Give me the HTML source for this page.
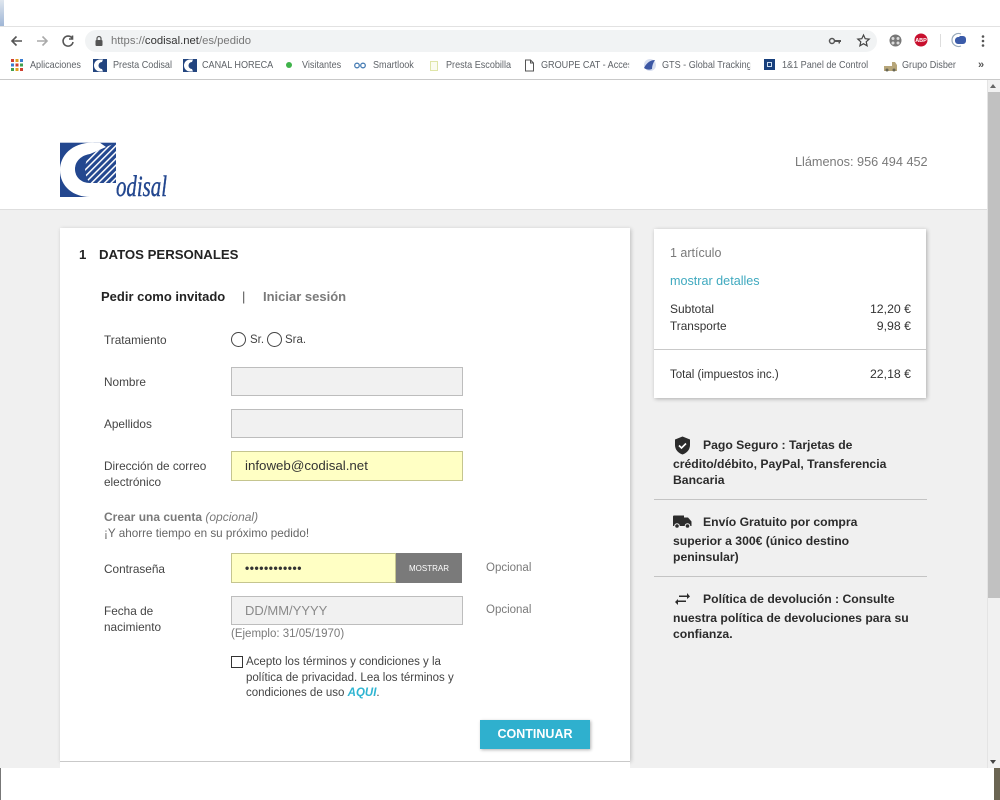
<!DOCTYPE html>
<html lang="es"><head><meta charset="utf-8"><title>Codisal pedido</title>
<style>
html,body{margin:0;padding:0;width:1000px;height:800px;overflow:hidden;background:#fff}
body{position:relative;font-family:"Liberation Sans",Arial,sans-serif;color:#3a3a3a}
.a{position:absolute;white-space:nowrap}
.bm{top:59px;font-size:10.2px;line-height:13px;color:#5f6368;transform:scaleX(.89);transform-origin:left center}
.lb{font-size:11.8px;line-height:16px;color:#444;left:104px}
.in{position:absolute;box-sizing:border-box;height:30px;left:231px;width:232px;background:#f1f1f1;border:1px solid #bdbdbd}
.y{background:#ffffc4;border-color:#c5c58f}
.h{font-size:12.2px;font-weight:bold;line-height:18px;color:#2b2b2b;left:673px}
.hr{position:absolute;left:654px;width:273px;height:1px;background:#c4c4c4}
.gr{color:#7a7a7a}
</style></head><body>
<div class="a" style="left:0;top:0;width:4px;height:26px;background:linear-gradient(#dfe6ee,#9fb6d6)"></div>
<div class="a" style="left:0;top:26px;width:1000px;height:54px;background:#fff"></div>
<div class="a" style="left:0;top:26px;width:1000px;height:1px;background:#e2e2e2"></div>
<div class="a" style="left:0;top:79px;width:1000px;height:1px;background:#c9c9c9"></div>
<svg class="a" style="left:8px;top:32px" width="70" height="18" viewBox="0 0 70 18" fill="none" stroke-width="1.6">
<path d="M14 9H4M8.500 4.500L4 9l4.500 4.500" stroke="#555"/>
<path d="M29 9H39M34.500 4.500L39 9l-4.500 4.500" stroke="#aaa"/>
<path d="M64 6a5 5 0 1 0 1 4M64.500 3.500V7H61" stroke="#555"/>
</svg>
<div class="a" style="left:85px;top:30px;width:792px;height:22px;border-radius:11px;background:#f1f3f4"></div>
<svg class="a" style="left:94px;top:35px" width="10" height="12" viewBox="0 0 10 12"><rect x="1.500" y="5" width="7" height="6" rx="1" fill="#555"/><path d="M3 5V3.500a2 2 0 0 1 4 0V5" fill="none" stroke="#555" stroke-width="1.200"/></svg>
<div class="a" style="left:111px;top:34px;font-size:11.3px;line-height:14px;color:#777">https://<span style="color:#333">codisal.net</span>/es/pedido</div>
<svg class="a" style="left:828px;top:34px" width="14" height="14" viewBox="0 0 14 14"><circle cx="4" cy="7" r="2.500" fill="none" stroke="#555" stroke-width="1.500"/><path d="M6.500 6h6.500v2h-1v1.500h-1.500V8H6.500z" fill="#555"/></svg>
<svg class="a" style="left:856px;top:33px" width="15" height="15" viewBox="0 0 15 15"><path d="M7.500 2l1.700 3.700 4 .4-3 2.700.9 4-3.600-2.100-3.600 2.100.9-4-3-2.700 4-.4z" fill="none" stroke="#444" stroke-width="1.200"/></svg>
<svg class="a" style="left:888px;top:33px" width="15" height="15" viewBox="0 0 15 15"><circle cx="7.500" cy="7.500" r="6" fill="#777"/><circle cx="5" cy="5.500" r="1.500" fill="#ddd"/><circle cx="10" cy="5.500" r="1.500" fill="#ddd"/><circle cx="5" cy="10" r="1.500" fill="#ddd"/><circle cx="10" cy="10" r="1.500" fill="#ddd"/></svg>
<svg class="a" style="left:914px;top:33px" width="14" height="14" viewBox="0 0 14 14"><circle cx="7" cy="7" r="6.500" fill="#c8102e"/><text x="7" y="9" font-size="5.500" font-weight="bold" text-anchor="middle" fill="#fff" font-family="Liberation Sans">ABP</text></svg>
<div class="a" style="left:940px;top:34px;width:1px;height:13px;background:#ddd"></div>
<svg class="a" style="left:950px;top:32px" width="17" height="16" viewBox="0 0 17 16"><path d="M11 2A6.500 6.500 0 1 0 11 14" fill="none" stroke="#9ab" stroke-width="1.200"/><path d="M5 9a3.500 3.500 0 0 1 4-4l1-1h3a3 3 0 0 1 3 3v2a3 3 0 0 1-3 3H8a3 3 0 0 1-3-3z" fill="#3b5ba9"/></svg>
<svg class="a" style="left:981px;top:34px" width="4" height="14" viewBox="0 0 4 14" fill="#555"><circle cx="2" cy="2.500" r="1.300"/><circle cx="2" cy="7" r="1.300"/><circle cx="2" cy="11.500" r="1.300"/></svg>

<svg class="a" style="left:11px;top:59px" width="12" height="12" viewBox="0 0 12 12"><g><rect width="3" height="3" fill="#d04030"/><rect x="4.500" width="3" height="3" fill="#e0a020"/><rect x="9" width="3" height="3" fill="#3a7cd0"/><rect y="4.500" width="3" height="3" fill="#3a7cd0"/><rect x="4.500" y="4.500" width="3" height="3" fill="#d04030"/><rect x="9" y="4.500" width="3" height="3" fill="#40a050"/><rect y="9" width="3" height="3" fill="#40a050"/><rect x="4.500" y="9" width="3" height="3" fill="#e0a020"/><rect x="9" y="9" width="3" height="3" fill="#d04030"/></g></svg>
<div class="a bm" style="left:30px">Aplicaciones</div>
<svg class="a" style="left:93px;top:59px" width="14" height="13" viewBox="0 0 14 13"><rect width="14" height="13" fill="#23457f"/><path d="M7 0.500a6 6 0 1 0 0 12h3l-1-2.500a3.500 3.500 0 1 1 0-7l1-2.500z" fill="#fff"/></svg>
<div class="a bm" style="left:113px">Presta Codisal</div>
<svg class="a" style="left:183px;top:59px" width="14" height="13" viewBox="0 0 14 13"><rect width="14" height="13" fill="#23457f"/><path d="M7 0.500a6 6 0 1 0 0 12h3l-1-2.500a3.500 3.500 0 1 1 0-7l1-2.500z" fill="#fff"/></svg>
<div class="a bm" style="left:202px">CANAL HORECA</div>
<div class="a" style="left:286px;top:62px;width:6px;height:6px;border-radius:50%;background:#3fb34a"></div>
<div class="a bm" style="left:302px">Visitantes</div>
<svg class="a" style="left:354px;top:62px" width="12" height="7" viewBox="0 0 12 7" fill="none" stroke="#4a7fb5" stroke-width="1.300"><circle cx="3" cy="3.500" r="2.300"/><circle cx="9" cy="3.500" r="2.300"/></svg>
<div class="a bm" style="left:373px">Smartlook</div>
<div class="a" style="left:430px;top:61px;width:6px;height:8px;border:1px solid #dfe5a8;background:#fbfcf0"></div>
<div class="a bm" style="left:446px">Presta Escobilla</div>
<svg class="a" style="left:524px;top:59px" width="11" height="13" viewBox="0 0 11 13"><path d="M1.500 1h5l3 3v8h-8zM6.500 1v3h3" fill="none" stroke="#555"/></svg>
<div class="a bm" style="left:541px;width:99px;overflow:hidden">GROUPE CAT - Acces</div>
<svg class="a" style="left:643px;top:58px" width="14" height="14" viewBox="0 0 14 14"><ellipse cx="7" cy="7" rx="6" ry="6" fill="#d8dff0"/><path d="M1 10c3-6 7-8 11-8-2 3-3 6-3 9-3 1-5 1-8-1z" fill="#3c57a3"/></svg>
<div class="a bm" style="left:662px;width:99px;overflow:hidden">GTS - Global Tracking</div>
<div class="a" style="left:764px;top:59px;width:11px;height:11px;background:#173f7c"><div style="position:absolute;left:3px;top:3px;width:5px;height:5px;border:1px solid #cde;box-sizing:border-box"></div></div>
<div class="a bm" style="left:782px">1&amp;1 Panel de Control</div>
<svg class="a" style="left:884px;top:59px" width="13" height="13" viewBox="0 0 13 13"><path d="M0 7h8V3h3l2 3v6H0z" fill="#b7a67a"/><circle cx="3" cy="11" r="1.500" fill="#665"/><circle cx="10" cy="11" r="1.500" fill="#665"/></svg>
<div class="a bm" style="left:902px">Grupo Disber</div>
<div class="a" style="left:978px;top:58px;font-size:11px;font-weight:bold;line-height:14px;color:#555">»</div>

<!-- page -->
<div class="a" style="left:0;top:80px;width:987px;height:129px;background:#fff"></div>
<div class="a" style="left:0;top:209px;width:987px;height:559px;background:#f0f0f0;border-top:1px solid #dedede;box-sizing:border-box"></div>
<svg class="a" style="left:60px;top:142px" width="110" height="58" viewBox="0 0 110 58">
<defs><pattern id="h" width="4.600" height="4.600" patternUnits="userSpaceOnUse" patternTransform="rotate(45)"><rect width="4.600" height="4.600" fill="#23478f"/><rect width="1.500" height="4.600" fill="#fff"/></pattern></defs>
<rect x="0" y="0.700" width="56" height="54.300" fill="#23478f"/>
<path d="M30 12L46 5 56 .7V41H30C21 41 15 35 15 27 15 19 22 13 30 12z" fill="url(#h)"/>
<path d="M30 12C22 13 15 19 15 27 15 35 21 41 30 41 24 34 23 22 30 12z" fill="#23478f"/>
<path d="M34 .7C12 0 0 14 0 28 0 45 14 55 30 55H56V41H30C21 41 15 35 15 27 15 19 22 13 30 12L46 5 40 .7z" fill="#fff"/>
<text x="56" y="54" font-family="Liberation Serif" font-style="italic" font-size="30" fill="#23478f" stroke="#23478f" stroke-width=".4" textLength="51" lengthAdjust="spacingAndGlyphs">odisal</text>
</svg>
<div class="a" style="left:795px;top:153px;font-size:12.700px;line-height:18px;color:#7a7a7a">Llámenos: 956 494 452</div>

<div class="a" style="left:60px;top:228px;width:570px;height:533px;background:#fff;box-shadow:1px 1px 4px rgba(0,0,0,.22)"></div>
<div class="a" style="left:60px;top:761px;width:570px;height:7px;background:#fff;border-top:1px solid #c9c9c9"></div>
<div class="a" style="left:79px;top:246px;font-size:13.200px;font-weight:bold;line-height:18px;color:#232323">1</div>
<div class="a" style="left:99px;top:246px;font-size:13.200px;font-weight:bold;line-height:18px;color:#232323">DATOS PERSONALES</div>
<div class="a" style="left:101px;top:288px;font-size:13px;font-weight:bold;line-height:18px;color:#232323">Pedir como invitado</div>
<div class="a" style="left:242px;top:288px;font-size:13px;line-height:18px;color:#555">|</div>
<div class="a" style="left:263px;top:288px;font-size:13px;font-weight:bold;line-height:18px;color:#7a7a7a">Iniciar sesión</div>

<div class="a lb" style="top:332px">Tratamiento</div>
<div class="a" style="left:231px;top:332px;width:13px;height:13px;border:1.500px solid #444;border-radius:50%;background:#fff"></div>
<div class="a" style="left:250px;top:332px;font-size:11.500px;line-height:16px;color:#444">Sr.</div>
<div class="a" style="left:267px;top:332px;width:13px;height:13px;border:1.500px solid #444;border-radius:50%;background:#fff"></div>
<div class="a" style="left:285px;top:332px;font-size:11.500px;line-height:16px;color:#444">Sra.</div>

<div class="a lb" style="top:374px">Nombre</div>
<div class="in" style="top:367px;height:29px"></div>
<div class="a lb" style="top:416px">Apellidos</div>
<div class="in" style="top:409px;height:29px"></div>
<div class="a lb" style="top:458px">Dirección de correo<br>electrónico</div>
<div class="in y" style="top:451px"></div>
<div class="a" style="left:245px;top:457px;font-size:13.300px;line-height:18px;color:#333">infoweb@codisal.net</div>

<div class="a" style="left:104px;top:509px;font-size:12px;line-height:16px;color:#7a7a7a"><b>Crear una cuenta</b> <i>(opcional)</i></div>
<div class="a" style="left:104px;top:526px;font-size:11.700px;line-height:16px;color:#666">¡Y ahorre tiempo en su próximo pedido!</div>

<div class="a lb" style="top:561px">Contraseña</div>
<div class="in y" style="top:553px;width:165px"></div>
<div class="a" style="left:396px;top:553px;width:66px;height:30px;background:#7a7a7a;color:#fff;font-size:8px;line-height:31px;text-align:center">MOSTRAR</div>
<div class="a" style="left:245px;top:559px;font-size:12px;line-height:18px;color:#333;letter-spacing:.55px;font-weight:bold">••••••••••••</div>
<div class="a gr" style="left:486px;top:560px;font-size:11.500px;line-height:16px">Opcional</div>

<div class="a lb" style="top:603px">Fecha de<br>nacimiento</div>
<div class="in" style="top:596px;height:29px"></div>
<div class="a" style="left:245px;top:602px;font-size:13px;line-height:18px;color:#8a8a8a">DD/MM/YYYY</div>
<div class="a gr" style="left:486px;top:602px;font-size:11.500px;line-height:16px">Opcional</div>
<div class="a gr" style="left:231px;top:626px;font-size:11.500px;line-height:16px">(Ejemplo: 31/05/1970)</div>

<div class="a" style="left:231px;top:656px;width:12px;height:12px;border:1.500px solid #333;background:#fff;box-sizing:border-box"></div>
<div class="a" style="left:246px;top:655px;font-size:11.500px;line-height:15.500px;color:#444">Acepto los términos y condiciones y la<br>política de privacidad. Lea los términos y<br>condiciones de uso <b style="color:#2fb5d2"><i>AQUI</i></b>.</div>

<div class="a" style="left:480px;top:720px;width:110px;height:29px;background:#2fb0ce;box-shadow:1px 1px 3px rgba(0,0,0,.3);color:#fff;font-size:12.500px;font-weight:bold;line-height:29px;text-align:center">CONTINUAR</div>

<!-- summary -->
<div class="a" style="left:654px;top:229px;width:272px;height:169px;background:#fff;box-shadow:1px 1px 4px rgba(0,0,0,.28)"></div>
<div class="a gr" style="left:670px;top:245px;font-size:12.500px;line-height:16px">1 artículo</div>
<div class="a" style="left:670px;top:273px;font-size:12.600px;line-height:16px;color:#3fa9bf">mostrar detalles</div>
<div class="a" style="left:670px;top:301px;font-size:12px;line-height:16px;color:#333">Subtotal</div>
<div class="a" style="left:810px;width:101px;text-align:right;top:301px;font-size:12.300px;line-height:16px;color:#333">12,20 €</div>
<div class="a" style="left:670px;top:318px;font-size:11.800px;line-height:16px;color:#333">Transporte</div>
<div class="a" style="left:810px;width:101px;text-align:right;top:318px;font-size:12.300px;line-height:16px;color:#333">9,98 €</div>
<div class="a" style="left:654px;top:349px;width:272px;height:1px;background:#c9c9c9"></div>
<div class="a" style="left:670px;top:367px;font-size:11.500px;line-height:16px;color:#333">Total (impuestos inc.)</div>
<div class="a" style="left:810px;width:101px;text-align:right;top:366px;font-size:12.300px;line-height:16px;color:#333">22,18 €</div>

<svg class="a" style="left:674px;top:436px" width="17" height="19" viewBox="0 0 17 19"><path d="M8.500 0.500L16 3.500V9c0 4.500-3 8-7.500 9.500C4 17 1 13.500 1 9V3.500z" fill="#2b2b2b"/><path d="M5 9.500l2.500 2.500 4.500-4.500" fill="none" stroke="#fff" stroke-width="1.600"/></svg>
<div class="a h" style="left:703px;top:436px">Pago Seguro : Tarjetas de</div>
<div class="a h" style="top:455px">crédito/débito, PayPal, Transferencia</div>
<div class="a h" style="top:471px">Bancaria</div>
<div class="hr" style="top:499px"></div>
<svg class="a" style="left:673px;top:515px" width="19" height="14" viewBox="0 0 19 14"><path d="M0 1.500A1 1 0 0 1 1 .5h10v2h4l3.500 4V11H0z" fill="#2b2b2b"/><circle cx="4" cy="11" r="2.300" fill="#2b2b2b" stroke="#f0f0f0"/><circle cx="14.500" cy="11" r="2.300" fill="#2b2b2b" stroke="#f0f0f0"/></svg>
<div class="a h" style="left:703px;top:513px">Envío Gratuito por compra</div>
<div class="a h" style="top:532px">superior a 300€ (único destino</div>
<div class="a h" style="top:548px">peninsular)</div>
<div class="hr" style="top:576px"></div>
<svg class="a" style="left:675px;top:593px" width="15" height="12" viewBox="0 0 15 12" fill="#2b2b2b"><path d="M4 2.500h8V0l3 3.500-3 2.500V4H4zM11 7.500H3V6L0 9l3 3V9h8z"/></svg>
<div class="a h" style="left:703px;top:590px">Política de devolución : Consulte</div>
<div class="a h" style="top:609px">nuestra política de devoluciones para su</div>
<div class="a h" style="top:625px">confianza.</div>

<!-- scrollbar -->
<div class="a" style="left:987px;top:80px;width:13px;height:688px;background:#f1f1f1;border-left:1px solid #e4e4e4;box-sizing:border-box"></div>
<div class="a" style="left:988px;top:92px;width:12px;height:506px;background:#c1c1c1"></div>
<div class="a" style="left:990px;top:84px;width:0;height:0;border-left:3.500px solid transparent;border-right:3.500px solid transparent;border-bottom:4px solid #666"></div>
<div class="a" style="left:990px;top:760px;width:0;height:0;border-left:3.500px solid transparent;border-right:3.500px solid transparent;border-top:4px solid #444"></div>
<div class="a" style="left:0;top:768px;width:1000px;height:32px;background:#fff"></div>
<div class="a" style="left:0;top:768px;width:1px;height:32px;background:#777"></div>
<div class="a" style="left:994px;top:768px;width:6px;height:32px;background:#6b6553"></div>
</body></html>
